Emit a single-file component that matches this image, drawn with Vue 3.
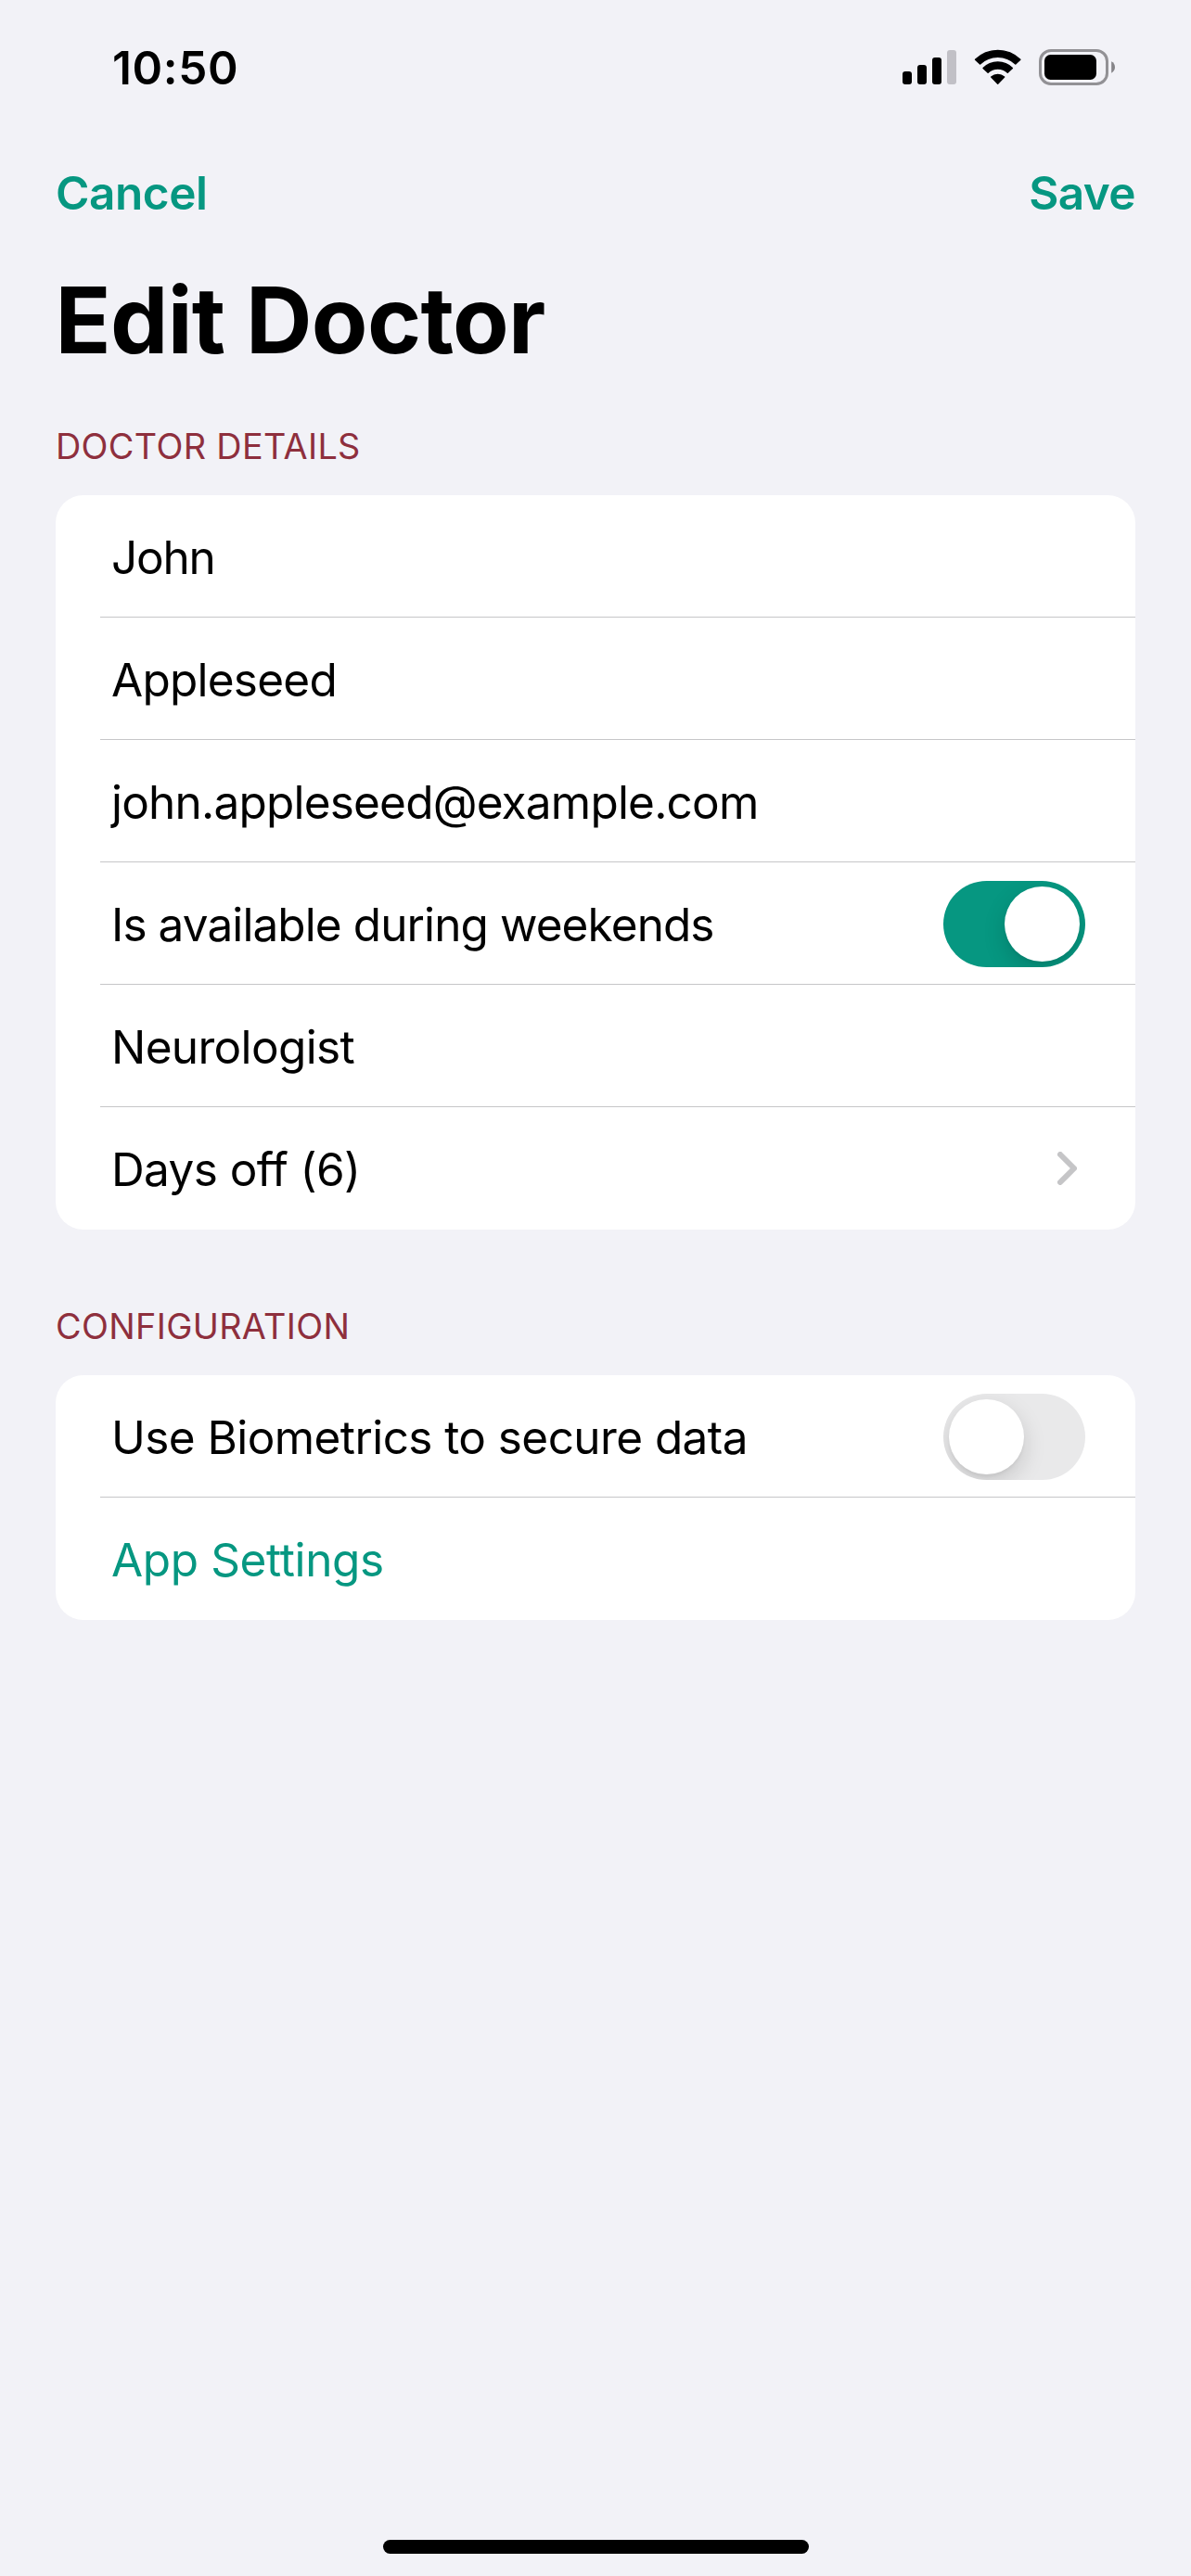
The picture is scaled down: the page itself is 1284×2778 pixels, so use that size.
<script setup>
import { ref } from 'vue'

const bars = [14, 21, 29, 37]

const sections = ref([
  {
    title: 'Doctor details',
    rows: [
      { label: 'John', tracking: -1.2 },
      { label: 'Appleseed', tracking: -0.75 },
      { label: 'john.appleseed@example.com', tracking: -0.8 },
      { label: 'Is available during weekends', tracking: -0.91, kind: 'toggle', on: true },
      { label: 'Neurologist', tracking: -0.66 },
      { label: 'Days off (6)', tracking: -0.6, kind: 'link' },
    ],
  },
  {
    title: 'Configuration',
    rows: [
      { label: 'Use Biometrics to secure data', tracking: -0.58, kind: 'toggle', on: false },
      { label: 'App Settings', tracking: -0.37, kind: 'action' },
    ],
  },
])
</script>

<template>
  <div class="screen">
    <header class="status">
      <span class="time">10:50</span>
      <div class="indicators">
        <svg class="signal" width="58" height="40" viewBox="0 0 58 40">
          <rect
            v-for="(h, i) in bars"
            :key="h"
            :x="i * 16"
            :y="38 - h"
            width="10"
            :height="h"
            rx="3"
            :fill="i === 3 ? '#c1c0c6' : '#000'"
          />
        </svg>
        <svg class="wifi" width="52" height="40" viewBox="0 0 52 40">
          <g stroke="#000" stroke-width="1.4" stroke-linejoin="round">
            <path d="M1.5 11.2A34.6 34.6 0 0 1 49.9 11.2L44.8 16A27.4 27.4 0 0 0 6.6 16Z" />
            <path d="M10 20.6A22 22 0 0 1 41.4 20.6L36.3 25.2A15.4 15.4 0 0 0 15.1 25.2Z" />
            <path d="M18.7 30A10.6 10.6 0 0 1 32.7 30L25.7 37.2Z" />
          </g>
        </svg>
        <svg class="battery" width="83" height="40" viewBox="0 0 83 40">
          <rect x="1.5" y="1.5" width="72" height="36" rx="11.5" fill="none" stroke="#929195" stroke-width="3" />
          <rect x="6" y="6" width="56" height="27" rx="6.5" />
          <path d="M78.2 13.3C80.6 14.5 82 16.9 82 19.5S80.6 24.5 78.2 25.7Z" fill="#858488" />
        </svg>
      </div>
    </header>

    <nav class="nav">
      <button class="cancel">Cancel</button>
      <button class="save">Save</button>
    </nav>

    <h1 class="title">Edit Doctor</h1>

    <main>
      <section v-for="section in sections" :key="section.title" class="section">
        <h2 class="heading">{{ section.title }}</h2>
        <div class="card">
          <div v-for="row in section.rows" :key="row.label" class="row">
            <span
              class="label"
              :class="{ action: row.kind === 'action' }"
              :style="{ letterSpacing: row.tracking + 'px' }"
            >{{ row.label }}</span>
            <button
              v-if="row.kind === 'toggle'"
              class="toggle"
              :class="{ on: row.on }"
              role="switch"
              :aria-checked="row.on"
              :aria-label="row.label"
              @click="row.on = !row.on"
            >
              <span class="knob"></span>
            </button>
            <svg v-else-if="row.kind === 'link'" class="chevron" width="21" height="36" viewBox="0 0 21 36">
              <path d="M3 3L18 18L3 33" fill="none" stroke="#c5c5c7" stroke-width="6" stroke-linecap="round" stroke-linejoin="round" />
            </svg>
          </div>
        </div>
      </section>
    </main>

    <div class="home"></div>
  </div>
</template>

<style>
body {
  margin: 0;
  background: #f2f2f7;
}
</style>

<style scoped>
.screen {
  display: flex;
  flex-direction: column;
  box-sizing: border-box;
  width: 1284px;
  height: 2778px;
  background: #f2f2f7;
  color: #000;
  font-family: Inter, "Liberation Sans", sans-serif;
  font-size: 49.5px;
}
button {
  border: 0;
  padding: 0;
  background: none;
  font: inherit;
}
.status {
  display: flex;
  justify-content: space-between;
  align-items: center;
  height: 146px;
  padding: 0 81px 0 121px;
}
.time {
  font-weight: 600;
  letter-spacing: 0.6px;
  line-height: 146px;
}
.indicators {
  display: flex;
}
.wifi {
  margin-left: 19px;
}
.battery {
  margin-left: 18px;
}
.nav {
  display: flex;
  justify-content: space-between;
  height: 124px;
  padding: 0 60px;
  line-height: 124px;
}
.nav button {
  color: #069781;
  font-weight: 600;
}
.cancel {
  letter-spacing: -0.45px;
}
.save {
  letter-spacing: -0.6px;
}
.title {
  margin: 0;
  padding-left: 59.5px;
  font-size: 99px;
  font-weight: 700;
  line-height: 150px;
  letter-spacing: -0.7px;
}
.section {
  padding: 0 60px;
}
.section + .section {
  margin-top: 43px;
}
.heading {
  margin: 0;
  padding-top: 8px;
  color: #8e2f3d;
  font-size: 37.8px;
  font-weight: 400;
  line-height: 106px;
  letter-spacing: 0.34px;
  text-transform: uppercase;
}
.card {
  overflow: hidden;
  border-radius: 30px;
  background: #fff;
}
.row {
  display: flex;
  justify-content: space-between;
  box-sizing: border-box;
  height: 132px;
  margin-left: 48px;
  padding: 0 54px 0 12px;
  border-bottom: 1px solid #c6c6c8;
}
.row:last-child {
  border-bottom: 0;
}
.label {
  line-height: 134px;
  white-space: nowrap;
}
.action {
  color: #069781;
}
.toggle {
  display: flex;
  box-sizing: border-box;
  width: 153px;
  height: 93px;
  margin-top: 20px;
  padding: 6px;
  overflow: hidden;
  border-radius: 47px;
  background: #e9e9ea;
}
.toggle.on {
  justify-content: flex-end;
  background: #069781;
}
.knob {
  width: 81px;
  height: 81px;
  border-radius: 50%;
  background: #fff;
  box-shadow: 0 9px 24px rgba(0, 0, 0, 0.15), 0 3px 3px rgba(0, 0, 0, 0.04);
}
.chevron {
  margin: 48px 9px 0 0;
}
.home {
  width: 459px;
  height: 15px;
  margin: auto auto 24px 413px;
  border-radius: 8px;
  background: #000;
}
</style>
